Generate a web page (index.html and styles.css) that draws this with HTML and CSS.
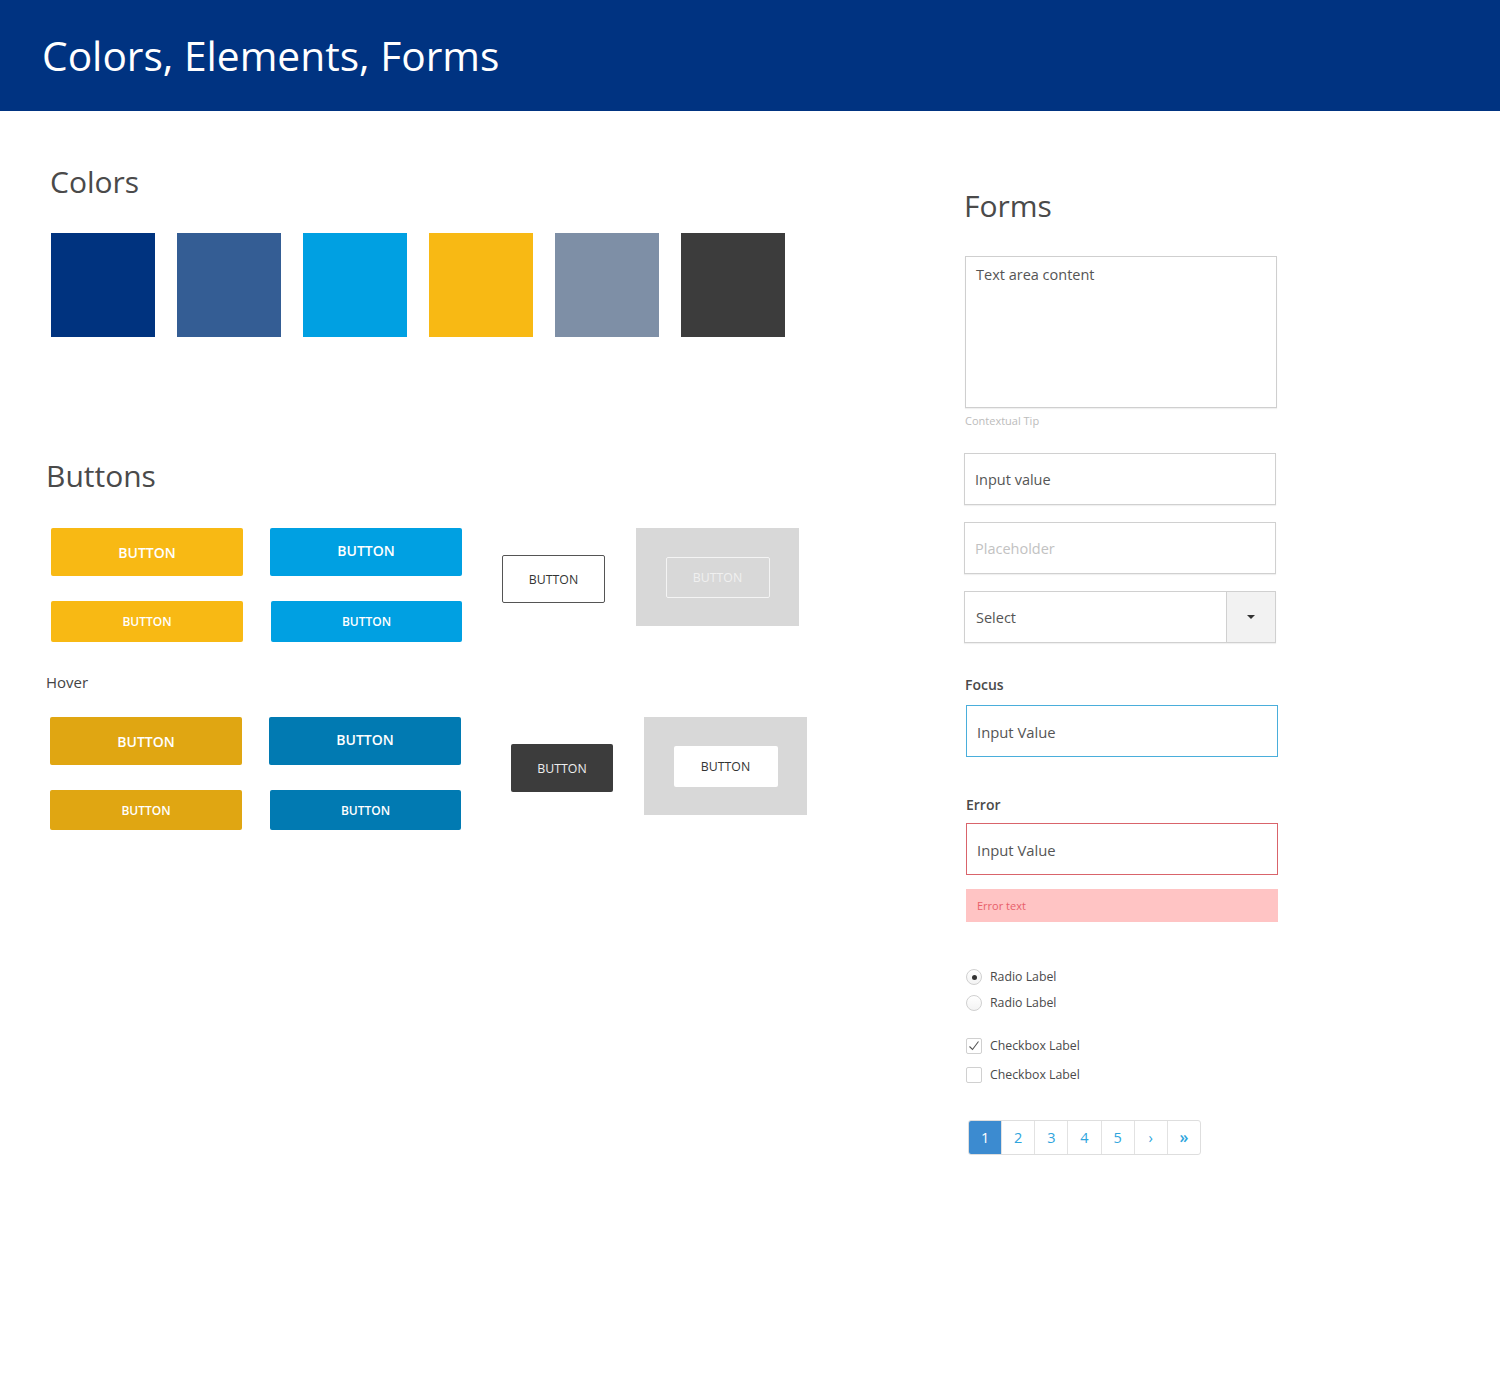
FILE: index.html
```html
<!DOCTYPE html>
<html lang="en">
<head>
<meta charset="utf-8">
<title>Colors, Elements, Forms</title>
<link rel="stylesheet" href="styles.css">
</head>
<body>
<header class="topbar">
  <h1 class="title">Colors, Elements, Forms</h1>
</header>
<main class="page">
  <section class="left">
    <h2 class="heading heading-colors">Colors</h2>
    <div class="swatches">
      <div class="swatch sw-navy"></div>
      <div class="swatch sw-steel"></div>
      <div class="swatch sw-sky"></div>
      <div class="swatch sw-yellow"></div>
      <div class="swatch sw-gray"></div>
      <div class="swatch sw-dark"></div>
    </div>

    <h2 class="heading heading-buttons">Buttons</h2>
    <div class="btn-row row-normal">
      <div class="btn-stack">
        <div class="btn btn-lg yellow">Button</div>
        <div class="btn btn-sm yellow">Button</div>
      </div>
      <div class="btn-stack stack-blue">
        <div class="btn btn-lg blue lift">Button</div>
        <div class="btn btn-sm blue shift">Button</div>
      </div>
      <div class="btn btn-ghost outline">Button</div>
      <div class="gray-box box-normal">
        <div class="btn btn-inner disabled">Button</div>
      </div>
    </div>

    <div class="hover-label">Hover</div>
    <div class="btn-row row-hover">
      <div class="btn-stack">
        <div class="btn btn-lg yellow-h">Button</div>
        <div class="btn btn-sm2 yellow-h">Button</div>
      </div>
      <div class="btn-stack stack-blue">
        <div class="btn btn-lg blue-h lift">Button</div>
        <div class="btn btn-sm2 blue-h shift">Button</div>
      </div>
      <div class="btn btn-ghost dark">Button</div>
      <div class="gray-box box-hover">
        <div class="btn btn-inner white">Button</div>
      </div>
    </div>
  </section>

  <section class="right">
    <h2 class="heading heading-forms">Forms</h2>
    <div class="textarea">Text area content</div>
    <div class="tip">Contextual Tip</div>
    <div class="field">Input value</div>
    <div class="field placeholder">Placeholder</div>
    <div class="field select">
      <span class="select-value">Select</span>
      <span class="select-btn"><span class="caret"></span></span>
    </div>

    <div class="label label-focus">Focus</div>
    <div class="field field-wide focus">Input Value</div>

    <div class="label label-error">Error</div>
    <div class="field field-wide error">Input Value</div>
    <div class="error-text">Error text</div>

    <div class="choices radios">
      <div class="choice"><span class="radio checked"></span><span class="choice-label">Radio Label</span></div>
      <div class="choice"><span class="radio"></span><span class="choice-label">Radio Label</span></div>
    </div>
    <div class="choices checks">
      <div class="choice"><span class="checkbox"><svg viewBox="0 0 16 16" width="16" height="16"><path d="M3.5 8.5 L6.5 11.5 L12.5 3.5" fill="none" stroke="#555" stroke-width="1.1"/></svg></span><span class="choice-label">Checkbox Label</span></div>
      <div class="choice"><span class="checkbox"></span><span class="choice-label">Checkbox Label</span></div>
    </div>

    <nav class="pager">
      <span class="page-cell active">1</span>
      <span class="page-cell">2</span>
      <span class="page-cell">3</span>
      <span class="page-cell">4</span>
      <span class="page-cell">5</span>
      <span class="page-cell">›</span>
      <span class="page-cell dbl">»</span>
    </nav>
  </section>
</main>
</body>
</html>
```

FILE: styles.css
```css
* { box-sizing: border-box; }
html, body { margin: 0; padding: 0; background: #fff; }
body { font-family: "Open Sans", "DejaVu Sans", sans-serif; color: #4a4a4a; }

.topbar { height: 111px; background: #003381; padding-left: 42px; }
.title { margin: 0; font-size: 40.7px; line-height: 111px; font-weight: 400; color: #fff; }

.page { display: flex; }
.left { width: 964px; flex: none; padding-left: 45px; padding-top: 53px; }
.right { width: 320px; flex: none; padding-top: 77px; }

.heading { margin: 0; font-size: 30px; line-height: 36px; font-weight: 400; color: #4a4a4a; }
.heading-colors { margin-left: 5px; }
.heading-buttons { margin-top: 121px; margin-left: 1px; }
.heading-forms { margin-left: 0; }

.swatches { display: flex; gap: 22px; margin-top: 33px; margin-left: 6px; }
.swatch { width: 104px; height: 104px; }
.sw-navy { background: #00337f; }
.sw-steel { background: #345d94; }
.sw-sky { background: #00a0e2; }
.sw-yellow { background: #f8b914; }
.sw-gray { background: #7e8fa6; }
.sw-dark { background: #3c3c3c; }

.btn-row { display: flex; align-items: flex-start; }
.row-normal { margin-top: 34px; margin-left: 6px; }
.row-hover { margin-top: 25px; margin-left: 5px; }

.btn-stack { display: flex; flex-direction: column; gap: 25px; width: 192px; }
.stack-blue { margin-left: 27px; }
.shift { margin-left: 1px; }
.lift { padding-bottom: 3px; }

.btn { display: flex; align-items: center; justify-content: center; text-transform: uppercase; border-radius: 2px; color: #fff; }
.btn-lg { height: 48px; font-size: 14px; font-weight: 600; }
.btn-sm { height: 41px; font-size: 12px; font-weight: 600; }
.btn-sm2 { height: 40px; font-size: 12px; font-weight: 600; }
.yellow { background: #f8b914; }
.blue { background: #00a0e2; }
.yellow-h { background: #e0a612; }
.blue-h { background: #017ab2; }

.btn-ghost { width: 103px; height: 48px; margin-top: 27px; font-size: 12.3px; }
.outline { margin-left: 40px; border: 1px solid #555; color: #333; background: #fff; }
.dark { margin-left: 50px; width: 102px; background: #3c3c3c; color: #eee; }

.gray-box { width: 163px; height: 98px; background: #d8d8d8; display: flex; align-items: center; justify-content: center; margin-left: 31px; }
.btn-inner { width: 104px; height: 41px; font-size: 12.3px; }
.disabled { border: 1px solid #f4f4f4; color: #f0f0f0; }
.white { background: #fff; color: #333; }

.hover-label { margin-top: 30px; margin-left: 1px; font-size: 15px; line-height: 20px; color: #444; }

/* Forms */
.textarea { margin-top: 32px; margin-left: 1px; width: 312px; height: 152px; border: 1px solid #cfcfcf; box-shadow: 0 1px 1px rgba(0,0,0,0.06); padding: 8px 10px; font-size: 14.5px; line-height: 20px; color: #555; }
.tip { margin-top: 5px; margin-left: 1px; font-size: 11px; line-height: 16px; color: #bcbcbc; }

.field { width: 312px; height: 52px; border: 1px solid #d0d0d0; box-shadow: 0 1px 1px rgba(0,0,0,0.06); padding: 2px 10px 0; font-size: 14.5px; line-height: 48px; color: #555; margin-top: 17px; }
.tip + .field { margin-top: 24px; }
.placeholder { color: #c2c2c2; }
.select { display: flex; padding: 0; }
.select-value { flex: 1; padding: 2px 11px 0; line-height: 48px; }
.select-btn { width: 49px; background: #f2f2f2; border-left: 1px solid #d0d0d0; display: flex; align-items: center; justify-content: center; }
.caret { width: 0; height: 0; border-left: 4px solid transparent; border-right: 4px solid transparent; border-top: 4px solid #333; }

.label { font-size: 14px; line-height: 20px; font-weight: 600; color: #4a4a4a; margin-left: 1px; }
.label-focus { margin-top: 32px; }
.label-error { margin-top: 38px; margin-left: 2px; }

.field-wide { margin-left: 2px; font-size: 14.8px; padding-left: 10px; }
.label-focus + .field { margin-top: 10px; }
.label-error + .field { margin-top: 8px; }
.focus { border-color: #4aaedb; box-shadow: none; }
.error { border-color: #d9646b; box-shadow: none; }

.error-text { margin-top: 14px; margin-left: 2px; width: 312px; height: 33px; background: #ffc4c4; color: #e8606a; font-size: 11px; line-height: 33px; padding-left: 11px; }

.choices { display: flex; flex-direction: column; margin-left: 2px; }
.radios { margin-top: 47px; gap: 10px; }
.checks { margin-top: 27px; gap: 13px; }
.choice { display: flex; align-items: center; height: 16px; gap: 8px; }
.choice-label { font-size: 12.3px; line-height: 16px; color: #4a4a4a; }
.radio { width: 16px; height: 16px; border-radius: 50%; border: 1px solid #d0d0d0; background: linear-gradient(#fff, #f3f3f3); display: flex; align-items: center; justify-content: center; }
.radio.checked::after { content: ""; width: 5px; height: 5px; border-radius: 50%; background: #333; }
.checkbox { width: 16px; height: 16px; border: 1px solid #d0d0d0; border-radius: 2px; background: #fff; display: flex; }
.checkbox svg { display: block; margin: -1px; }

.pager { display: flex; margin-top: 37px; margin-left: 4px; width: 233px; height: 35px; border: 1px solid #dedede; border-radius: 3px; overflow: hidden; }
.page-cell { flex: 1; display: flex; align-items: center; justify-content: center; font-size: 14.5px; color: #2ea5dd; border-left: 1px solid #e2e2e2; }
.page-cell:first-child { border-left: none; }
.page-cell.active { background: #3c8bd0; color: #fff; }
.page-cell.dbl { font-size: 16px; font-weight: 600; padding-bottom: 2px; }
```
